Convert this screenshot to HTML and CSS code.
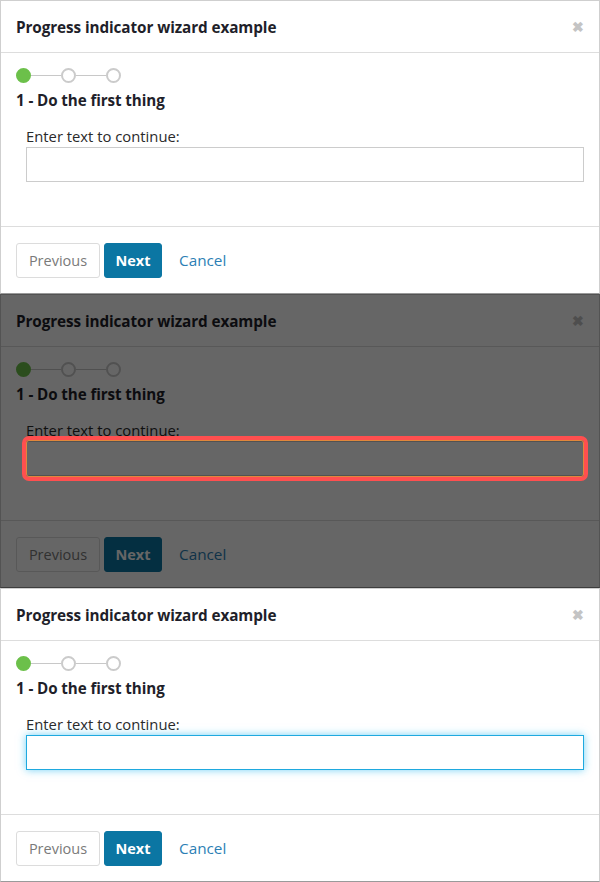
FILE: index.html
```html
<!DOCTYPE html>
<html>
<head>
<meta charset="utf-8">
<link rel="stylesheet" href="styles.css">
</head>
<body>
<div class="stack">
  <section class="panel">
    <header class="head"><h2 class="title">Progress indicator wizard example</h2><span class="close">&#x2716;</span></header>
    <div class="body">
      <div class="steps"><span class="dot done"></span><span class="line"></span><span class="dot"></span><span class="line"></span><span class="dot"></span></div>
      <h3 class="step-title">1 - Do the first thing</h3>
      <label class="field"><span class="label">Enter text to continue:</span><span class="box"><input class="input" type="text"></span></label>
    </div>
    <footer class="foot"><button class="btn prev">Previous</button><button class="btn next">Next</button><a class="cancel">Cancel</a></footer>
  </section>
  <section class="panel dim">
    <header class="head"><h2 class="title">Progress indicator wizard example</h2><span class="close">&#x2716;</span></header>
    <div class="body">
      <div class="steps"><span class="dot done"></span><span class="line"></span><span class="dot"></span><span class="line"></span><span class="dot"></span></div>
      <h3 class="step-title">1 - Do the first thing</h3>
      <label class="field"><span class="label">Enter text to continue:</span><span class="box spot"><input class="input" type="text"></span></label>
    </div>
    <footer class="foot"><button class="btn prev">Previous</button><button class="btn next">Next</button><a class="cancel">Cancel</a></footer>
  </section>
  <section class="panel">
    <header class="head"><h2 class="title">Progress indicator wizard example</h2><span class="close">&#x2716;</span></header>
    <div class="body">
      <div class="steps"><span class="dot done"></span><span class="line"></span><span class="dot"></span><span class="line"></span><span class="dot"></span></div>
      <h3 class="step-title">1 - Do the first thing</h3>
      <label class="field"><span class="label">Enter text to continue:</span><span class="box"><input class="input focus" type="text"></span></label>
    </div>
    <footer class="foot"><button class="btn prev">Previous</button><button class="btn next">Next</button><a class="cancel">Cancel</a></footer>
  </section>
</div>
</body>
</html>
```
FILE: styles.css
```css
* { box-sizing: border-box; }
html, body { margin: 0; padding: 0; background: #fff; }
body { font-family: "Open Sans", "Noto Sans", sans-serif; color: #222; }
.stack { display: flex; flex-direction: column; width: 600px; }
.panel {
  position: relative;
  z-index: 0;
  height: 294px;
  border: 1px solid #cfcfcf;
  border-bottom-color: #9a9a9a;
  display: flex;
  flex-direction: column;
  background: #fff;
}
.head {
  height: 52px;
  flex: none;
  border-bottom: 1px solid #ddd;
  display: flex;
  align-items: center;
  justify-content: space-between;
  padding: 0 15px 0 15px;
}
.title { margin: 0; font-size: 15.3px; font-weight: 700; color: #1f1f2a; letter-spacing: -0.1px; }
.close { color: #c4c4c4; font-size: 14px; font-weight: 700; line-height: 1; margin-right: 0; }
.body {
  flex: 1;
  padding: 15px 15px 0 15px;
  border-bottom: 1px solid #ddd;
}
.steps { display: flex; align-items: center; height: 15px; }
.dot { width: 15px; height: 15px; border-radius: 50%; border: 2px solid #cbcbcb; background: #fff; flex: none; }
.dot.done { background: #6cc04a; border-color: #6cc04a; }
.line { width: 30px; height: 1px; background: #c8c8c8; flex: none; }
.step-title { margin: 7px 0 0; font-size: 15.2px; font-weight: 700; color: #1f1f2a; line-height: 20px; letter-spacing: -0.1px; }
.field { display: flex; flex-direction: column; margin: 17px 0 0 10px; width: 558px; }
.label { font-size: 14.8px; color: #2a2a2a; line-height: 19px; }
.box { position: relative; display: block; margin-top: 1px; }
.input {
  display: block;
  width: 558px;
  height: 35px;
  border: 1px solid #cccccc;
  background: #fff;
  margin: 0;
  padding: 0 8px;
  outline: none;
}
.input.focus {
  border-color: #1fa9df;
  box-shadow: 0 0 8px rgba(40, 185, 240, 0.65);
}
.foot {
  height: 66px;
  flex: none;
  display: flex;
  align-items: center;
  gap: 4px;
  padding: 0 15px;
}
.btn {
  height: 35px;
  border-radius: 3px;
  font-family: inherit;
  font-size: 14.5px;
  padding: 0;
  cursor: pointer;
}
.prev { width: 84px; background: #fff; border: 1px solid #dcdcdc; color: #7a7a7a; }
.next { width: 58px; background: #0b76a3; border: 1px solid #0b76a3; color: #fff; font-weight: 700; }
.cancel { margin-left: 13px; font-size: 15.3px; color: #2c7fb5; }

.dim::after {
  content: "";
  position: absolute;
  inset: -1px;
  background: rgba(0, 0, 0, 0.6);
  z-index: 1;
}
.spot::after {
  content: "";
  position: absolute;
  inset: -5px -4px -5px -4px;
  border: 4px solid #ff4f4f;
  border-radius: 7px;
  box-shadow: inset 0 0 0 1px #e0873c;
  z-index: 2;
}
```
